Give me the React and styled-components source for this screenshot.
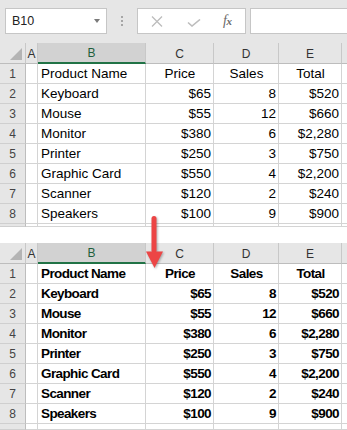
import React from "react";
import styled, { createGlobalStyle } from "styled-components";

const Global = createGlobalStyle`
  html, body { margin: 0; padding: 0; background: #fff; }
  body { font-family: "Liberation Sans", Arial, sans-serif; }
`;

const Page = styled.div`
  position: relative;
  width: 347px;
  height: 430px;
  overflow: hidden;
  display: flex;
  flex-direction: column;
  background: #fff;
`;

const FormulaBar = styled.div`
  height: 43px;
  box-sizing: border-box;
  background: #e6e6e6;
  display: flex;
  align-items: flex-start;
  padding: 8px 0 0 5px;
`;

const NameBox = styled.div`
  width: 102px;
  height: 26px;
  box-sizing: border-box;
  background: #fff;
  border: 1px solid #c6c6c6;
  display: flex;
  align-items: center;
  justify-content: space-between;
  padding: 0 6px 0 6px;
  font-size: 12.5px;
  color: #222;
`;

const DropTri = styled.span`
  width: 0;
  height: 0;
  border-left: 3.5px solid transparent;
  border-right: 3.5px solid transparent;
  border-top: 4px solid #7a7a7a;
`;

const Grip = styled.div`
  margin: 8px 14px 0 14px;
  display: flex;
  flex-direction: column;
  gap: 2px;
  & > span {
    width: 2px;
    height: 2px;
    background: #a6a6a6;
  }
`;

const FxBox = styled.div`
  width: 109px;
  height: 26px;
  box-sizing: border-box;
  background: #fff;
  border: 1px solid #c6c6c6;
  display: flex;
  align-items: center;
  padding-left: 13px;
`;

const FxIcon = styled.span`
  font-family: "Liberation Serif", "Times New Roman", serif;
  font-style: italic;
  font-size: 14px;
  color: #6a6a6a;
  margin-left: 22px;
  letter-spacing: -0.5px;
  & > small {
    font-size: 11px;
    font-weight: bold;
  }
`;

const FormulaInput = styled.div`
  flex: 1;
  margin-left: 4px;
  height: 26px;
  box-sizing: border-box;
  background: #fff;
  border: 1px solid #c6c6c6;
  border-right: none;
`;

const Sheet = styled.div`
  display: grid;
  grid-template-columns: 26px 12px 108px 68px 65px 63px 1fr;
  grid-template-rows: 21px repeat(8, 20px) ${(p) => p.$tail}px;
  overflow: hidden;
  margin-top: ${(p) => p.$gap}px;
`;

const Corner = styled.div`
  position: relative;
  background: #e6e6e6;
  border-right: 1px solid #c8c8c8;
  border-bottom: 1px solid #bdbdbd;
  box-sizing: border-box;
  &::after {
    content: "";
    position: absolute;
    left: 10px;
    top: 5px;
    width: 12px;
    height: 12px;
    background: #b4b4b4;
    clip-path: polygon(100% 0, 100% 100%, 0 100%);
  }
`;

const ColHead = styled.div`
  box-sizing: border-box;
  background: ${(p) => (p.$sel ? "#d2d2d2" : "#e6e6e6")};
  border-right: 1px solid #c8c8c8;
  border-bottom: ${(p) => (p.$sel ? "2px solid #217346" : "1px solid #bdbdbd")};
  color: ${(p) => (p.$sel ? "#1f5f3c" : "#333")};
  font-size: 12px;
  display: flex;
  align-items: center;
  justify-content: center;
  padding-top: 1px;
`;

const RowHead = styled.div`
  box-sizing: border-box;
  background: #e6e6e6;
  border-right: 1px solid #bdbdbd;
  border-bottom: 1px solid #cfcfcf;
  color: #444;
  font-size: 12px;
  display: flex;
  align-items: center;
  justify-content: center;
  overflow: hidden;
`;

const Cell = styled.div`
  box-sizing: border-box;
  border-right: 1px solid #d4d4d4;
  border-bottom: 1px solid #d4d4d4;
  font-size: 13.5px;
  line-height: 20px;
  color: #000;
  font-weight: ${(p) => (p.$bold ? 700 : 400)};
  letter-spacing: ${(p) => (p.$bold ? "-0.6px" : "0")};
  text-align: ${(p) => p.$align || "left"};
  padding: 0 2px 0 3px;
  white-space: nowrap;
  overflow: hidden;
`;

const ArrowWrap = styled.svg`
  position: absolute;
  left: 143px;
  top: 213px;
  filter: drop-shadow(1px 1px 1px rgba(0, 0, 0, 0.3));
`;

const data = [
  ["Product Name", "Price", "Sales", "Total"],
  ["Keyboard", "$65", "8", "$520"],
  ["Mouse", "$55", "12", "$660"],
  ["Monitor", "$380", "6", "$2,280"],
  ["Printer", "$250", "3", "$750"],
  ["Graphic Card", "$550", "4", "$2,200"],
  ["Scanner", "$120", "2", "$240"],
  ["Speakers", "$100", "9", "$900"],
];

function SheetView({ bold, tail, gap }) {
  return (
    <Sheet $tail={tail} $gap={gap}>
      <Corner />
      <ColHead>A</ColHead>
      <ColHead $sel>B</ColHead>
      <ColHead>C</ColHead>
      <ColHead>D</ColHead>
      <ColHead>E</ColHead>
      <ColHead />
      {data.map((r, i) => (
        <React.Fragment key={i}>
          <RowHead>{i + 1}</RowHead>
          <Cell />
          <Cell $bold={bold}>{r[0]}</Cell>
          <Cell $bold={bold} $align={i === 0 ? "center" : "right"}>{r[1]}</Cell>
          <Cell $bold={bold} $align={i === 0 ? "center" : "right"}>{r[2]}</Cell>
          <Cell $bold={bold} $align={i === 0 ? "center" : "right"}>{r[3]}</Cell>
          <Cell />
        </React.Fragment>
      ))}
      <RowHead />
      <Cell />
      <Cell />
      <Cell />
      <Cell />
      <Cell />
      <Cell />
    </Sheet>
  );
}

export default function App() {
  return (
    <Page>
      <Global />
      <FormulaBar>
        <NameBox>
          <span>B10</span>
          <DropTri />
        </NameBox>
        <Grip>
          <span />
          <span />
          <span />
        </Grip>
        <FxBox>
          <svg width="12" height="11" viewBox="0 0 12 11">
            <path d="M1 0.5 L11 10.5 M11 0.5 L1 10.5" stroke="#bdbdbd" strokeWidth="1.3" fill="none" />
          </svg>
          <svg width="14" height="8" viewBox="0 0 14 8" style={{ marginLeft: 24, marginTop: 3 }}>
            <path d="M1 3.5 L5 7 L13 0.5" stroke="#bdbdbd" strokeWidth="1.6" fill="none" />
          </svg>
          <FxIcon>
            f<small>x</small>
          </FxIcon>
        </FxBox>
        <FormulaInput />
      </FormulaBar>
      <SheetView tail={3} gap={0} />
      <SheetView bold tail={6} gap={16} />
      <ArrowWrap width="24" height="58" viewBox="0 0 24 58">
        <rect x="8.5" y="3" width="5" height="37" rx="2.5" fill="#ec4545" />
        <polygon points="3,38.5 20,38.5 11.5,55" fill="#ec4545" />
      </ArrowWrap>
    </Page>
  );
}
